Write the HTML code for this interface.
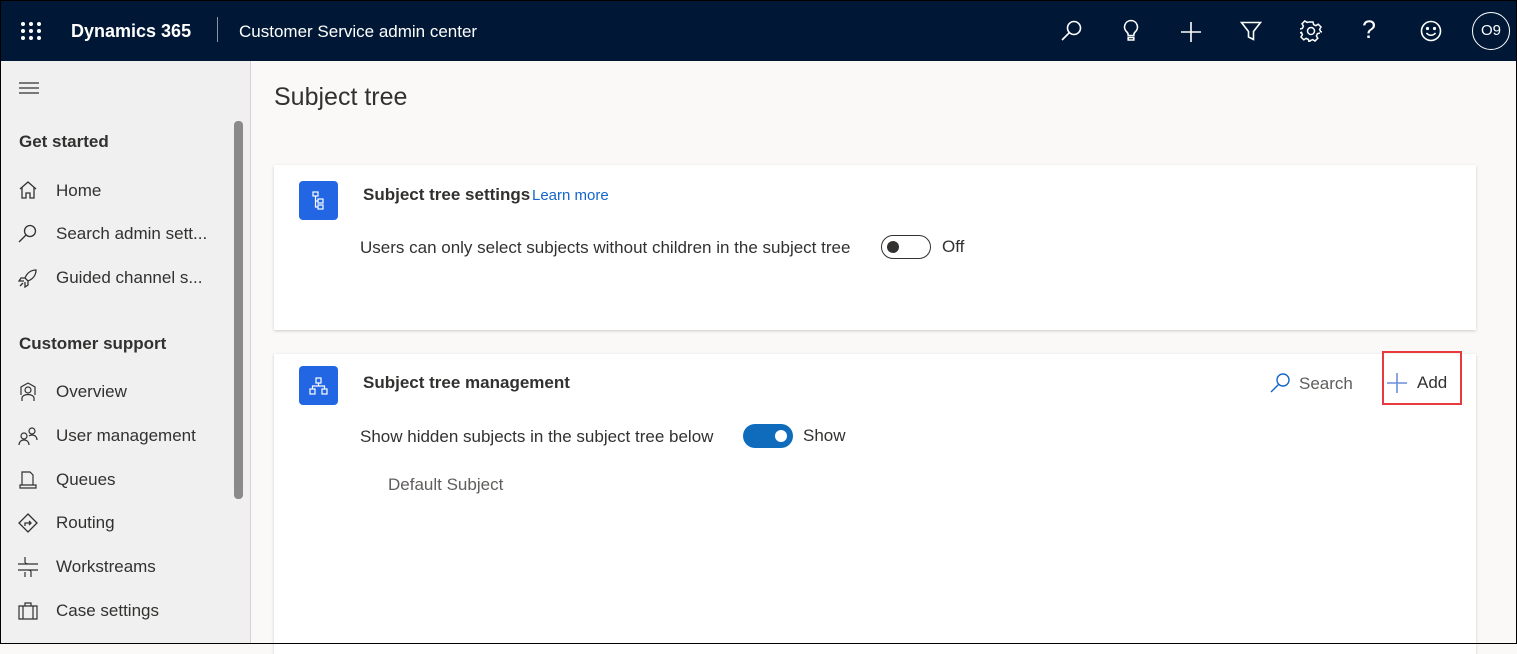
<!DOCTYPE html>
<html><head><style>
*{margin:0;padding:0;box-sizing:border-box}
body{width:1517px;height:644px;overflow:hidden;font-family:"Liberation Sans",sans-serif;background:#faf9f8;position:relative;color:#323130}
#frame{position:absolute;left:0;top:0;width:1517px;height:644px;border:1px solid #000;z-index:10;pointer-events:none}
.hdr{position:absolute;left:0;top:0;width:1517px;height:61px;background:#001836;color:#fff}
.side{position:absolute;left:0;top:61px;width:251px;height:583px;background:#f0f0f0;border-right:1px solid #d4d4d4}
.abs{position:absolute}
.nav{position:absolute;left:56px;font-size:17px;color:#323130}
.sec{position:absolute;left:19px;font-size:17px;font-weight:bold;color:#323130}
.ic{position:absolute;left:18px}
.card{position:absolute;left:274px;width:1202px;background:#fff;box-shadow:0 1px 3px rgba(0,0,0,.18)}
.bi{position:absolute;width:39px;height:39px;background:#2266e3;border-radius:4px}
</style></head><body>
<div id="frame"></div>
<div class="hdr">
<svg class="abs" style="left:21px;top:22px" width="20" height="18"><g fill="#fff"><circle cx="2" cy="2" r="2"/><circle cx="10" cy="2" r="2"/><circle cx="18" cy="2" r="2"/><circle cx="2" cy="9" r="2"/><circle cx="10" cy="9" r="2"/><circle cx="18" cy="9" r="2"/><circle cx="2" cy="16" r="2"/><circle cx="10" cy="16" r="2"/><circle cx="18" cy="16" r="2"/></g></svg>
<div class="abs" style="left:71px;top:21px;font-size:18px;font-weight:bold">Dynamics 365</div>
<div class="abs" style="left:217px;top:17px;width:1px;height:25px;background:#8a96a8"></div>
<div class="abs" style="left:239px;top:22px;font-size:17px">Customer Service admin center</div>
<svg class="abs" style="left:1060px;top:20px" width="24" height="22" fill="none" stroke="#fff" stroke-width="1.6"><circle cx="14" cy="8" r="6.5"/><path d="M9.5 12.5 2 20"/></svg>
<svg class="abs" style="left:1122px;top:19px" width="18" height="24" fill="none" stroke="#fff" stroke-width="1.6"><path d="M9 1.5a6.5 6.5 0 0 0-4 11.6c1 .9 1.2 2 1.2 3.4h5.6c0-1.4.2-2.5 1.2-3.4A6.5 6.5 0 0 0 9 1.5zM6.2 18.5h5.6v2.5H6.2z"/></svg>
<svg class="abs" style="left:1180px;top:21px" width="22" height="22" stroke="#fff" stroke-width="1.6"><path d="M11 1v20M1 11h20"/></svg>
<svg class="abs" style="left:1240px;top:21px" width="22" height="20" fill="none" stroke="#fff" stroke-width="1.6"><path d="M1.5 1.5h19l-7 9v8l-5-2.5v-5.5z"/></svg>
<svg class="abs" style="left:1300px;top:20px" width="22" height="22" fill="none" stroke="#fff" stroke-width="1.5"><circle cx="11" cy="11" r="3.5"/><path d="M9 2h4l.6 2.6 2.3 1 2.3-1.4 2.8 2.8-1.4 2.3 1 2.3 2.6.6v0M20 13l-2.6.6-1 2.3 1.4 2.3-2.8 2.8-2.3-1.4-2.3 1L9.4 22H9l-.6-2.6-2.3-1-2.3 1.4-2.8-2.8 1.4-2.3-1-2.3L0 13M0 9l2.4-.6 1-2.3L2 3.8 4.8 1l2.3 1.4L9 2"/></svg>
<div class="abs" style="left:1362px;top:16px;font-size:25px">?</div>
<svg class="abs" style="left:1420px;top:20px" width="22" height="22" fill="none" stroke="#fff" stroke-width="1.6"><circle cx="11" cy="11" r="9.5"/><circle cx="7.5" cy="8.5" r=".8" fill="#fff"/><circle cx="14.5" cy="8.5" r=".8" fill="#fff"/><path d="M6.5 13c2.5 3 6.5 3 9 0"/></svg>
<div class="abs" style="left:1472px;top:12px;width:38px;height:38px;border:1px solid #fff;border-radius:50%;font-size:15px;text-align:center;line-height:36px">O9</div>
</div>
<div class="side">
<svg class="abs" style="left:19px;top:21px" width="20" height="12" stroke="#323130" stroke-width="1.2"><path d="M0 1h20M0 6h20M0 11h20"/></svg>
<div class="abs" style="left:234px;top:60px;width:9px;height:378px;background:#8a8a8a;border-radius:4px"></div>
<div class="sec" style="top:71px">Get started</div>
<svg class="ic" style="top:120px" width="20" height="18" fill="none" stroke="#323130" stroke-width="1.3"><path d="M2 8 10 1l8 7M4 6.5V17h4v-5h4v5h4V6.5"/></svg>
<div class="nav" style="top:120px">Home</div>
<svg class="ic" style="top:163px" width="20" height="20" fill="none" stroke="#323130" stroke-width="1.3"><circle cx="12" cy="7" r="5.5"/><path d="M8 11 1 18"/></svg>
<div class="nav" style="top:163px">Search admin sett...</div>
<svg class="ic" style="top:207px" width="20" height="20" fill="none" stroke="#323130" stroke-width="1.3"><path d="M18 2c-5 0-9 3-11 8l3 3c5-2 8-6 8-11zM7 10H3l-2 3h5M10 13v4l-3 2v-5M5 15l-3 3"/></svg>
<div class="nav" style="top:207px">Guided channel s...</div>
<div class="sec" style="top:273px">Customer support</div>
<svg class="ic" style="top:321px" width="20" height="20" fill="none" stroke="#323130" stroke-width="1.2"><circle cx="10" cy="8" r="3"/><path d="M4 19v-3c0-2 3-3.5 6-3.5s6 1.5 6 3.5v3M10 1l7 4v8M10 1 3 5v8"/></svg>
<div class="nav" style="top:321px">Overview</div>
<svg class="ic" style="top:365px" width="20" height="20" fill="none" stroke="#323130" stroke-width="1.2"><circle cx="6" cy="10" r="3"/><circle cx="14" cy="5" r="3"/><path d="M1 19c0-3 2-5 5-5s5 2 5 5M11 10c1-1 2-1 3-1 3 0 5 2 5 5"/></svg>
<div class="nav" style="top:365px">User management</div>
<svg class="ic" style="top:409px" width="20" height="20" fill="none" stroke="#323130" stroke-width="1.2"><path d="M4 15V2h8l3 3v10M2 15h16v3H2z"/></svg>
<div class="nav" style="top:409px">Queues</div>
<svg class="ic" style="top:452px" width="20" height="20" fill="none" stroke="#323130" stroke-width="1.3"><path d="M10 1l9 9-9 9-9-9zM7 13v-3h6M11 8l2 2-2 2"/></svg>
<div class="nav" style="top:452px">Routing</div>
<svg class="ic" style="top:496px" width="20" height="20" fill="none" stroke="#323130" stroke-width="1.2"><path d="M0 7h20M0 13h20M7 0v5c0 1.5 3 2 3 2M13 20v-5c0-2-2-2-3-2M7 20v-5"/></svg>
<div class="nav" style="top:496px">Workstreams</div>
<svg class="ic" style="top:540px" width="20" height="20" fill="none" stroke="#323130" stroke-width="1.2"><path d="M1 5h18v13H1zM7 5V2h6v3M5 5v13M15 5v13"/></svg>
<div class="nav" style="top:540px">Case settings</div>
</div>
<div class="abs" style="left:274px;top:83px;font-size:25px;color:#323130">Subject tree</div>
<div class="card" style="top:165px;height:165px">
<div class="bi" style="left:25px;top:16px"><svg width="39" height="39" fill="none" stroke="#fff" stroke-width="1.2"><rect x="14" y="11" width="5" height="4"/><rect x="19" y="18" width="5" height="4"/><rect x="19" y="24" width="5" height="4"/><path d="M16.5 15v11h2.5M16.5 20h2.5"/></svg></div>
<div class="abs" style="left:89px;top:20px;font-size:17px;font-weight:bold">Subject tree settings</div>
<div class="abs" style="left:258px;top:22px;font-size:15px;color:#1466c8">Learn more</div>
<div class="abs" style="left:86px;top:73px;font-size:17px">Users can only select subjects without children in the subject tree</div>
<div class="abs" style="left:607px;top:70px;width:50px;height:24px;border:1px solid #323130;border-radius:12px"><div class="abs" style="left:5px;top:5px;width:12px;height:12px;border-radius:50%;background:#323130"></div></div>
<div class="abs" style="left:668px;top:72px;font-size:17px">Off</div>
</div>
<div class="card" style="top:354px;height:300px">
<div class="bi" style="left:25px;top:12px"><svg width="39" height="39" fill="none" stroke="#fff" stroke-width="1.2"><rect x="17" y="12" width="5" height="5"/><rect x="11" y="23" width="5" height="5"/><rect x="23" y="23" width="5" height="5"/><path d="M19.5 17v3M13.5 23v-3h12v3"/></svg></div>
<div class="abs" style="left:89px;top:19px;font-size:17px;font-weight:bold">Subject tree management</div>
<svg class="abs" style="left:995px;top:18px" width="22" height="22" fill="none" stroke="#1466c8" stroke-width="1.4"><circle cx="14" cy="8" r="6"/><path d="M9.5 12.5 2 20"/></svg>
<div class="abs" style="left:1025px;top:20px;font-size:17px;color:#605e5c">Search</div>
<div class="abs" style="left:1108px;top:-3px;width:80px;height:54px;border:2px solid #e8393e"></div>
<svg class="abs" style="left:1112px;top:18px" width="22" height="22" stroke="#6a8fd8" stroke-width="1.6"><path d="M11 1v20M1 11h20"/></svg>
<div class="abs" style="left:1143px;top:19px;font-size:17px">Add</div>
<div class="abs" style="left:86px;top:73px;font-size:17px">Show hidden subjects in the subject tree below</div>
<div class="abs" style="left:469px;top:70px;width:50px;height:24px;background:#0f6cbd;border-radius:12px"><div class="abs" style="left:32px;top:6px;width:12px;height:12px;border-radius:50%;background:#fff"></div></div>
<div class="abs" style="left:529px;top:72px;font-size:17px">Show</div>
<div class="abs" style="left:114px;top:121px;font-size:17px;color:#605e5c">Default Subject</div>
</div>
</body></html>
